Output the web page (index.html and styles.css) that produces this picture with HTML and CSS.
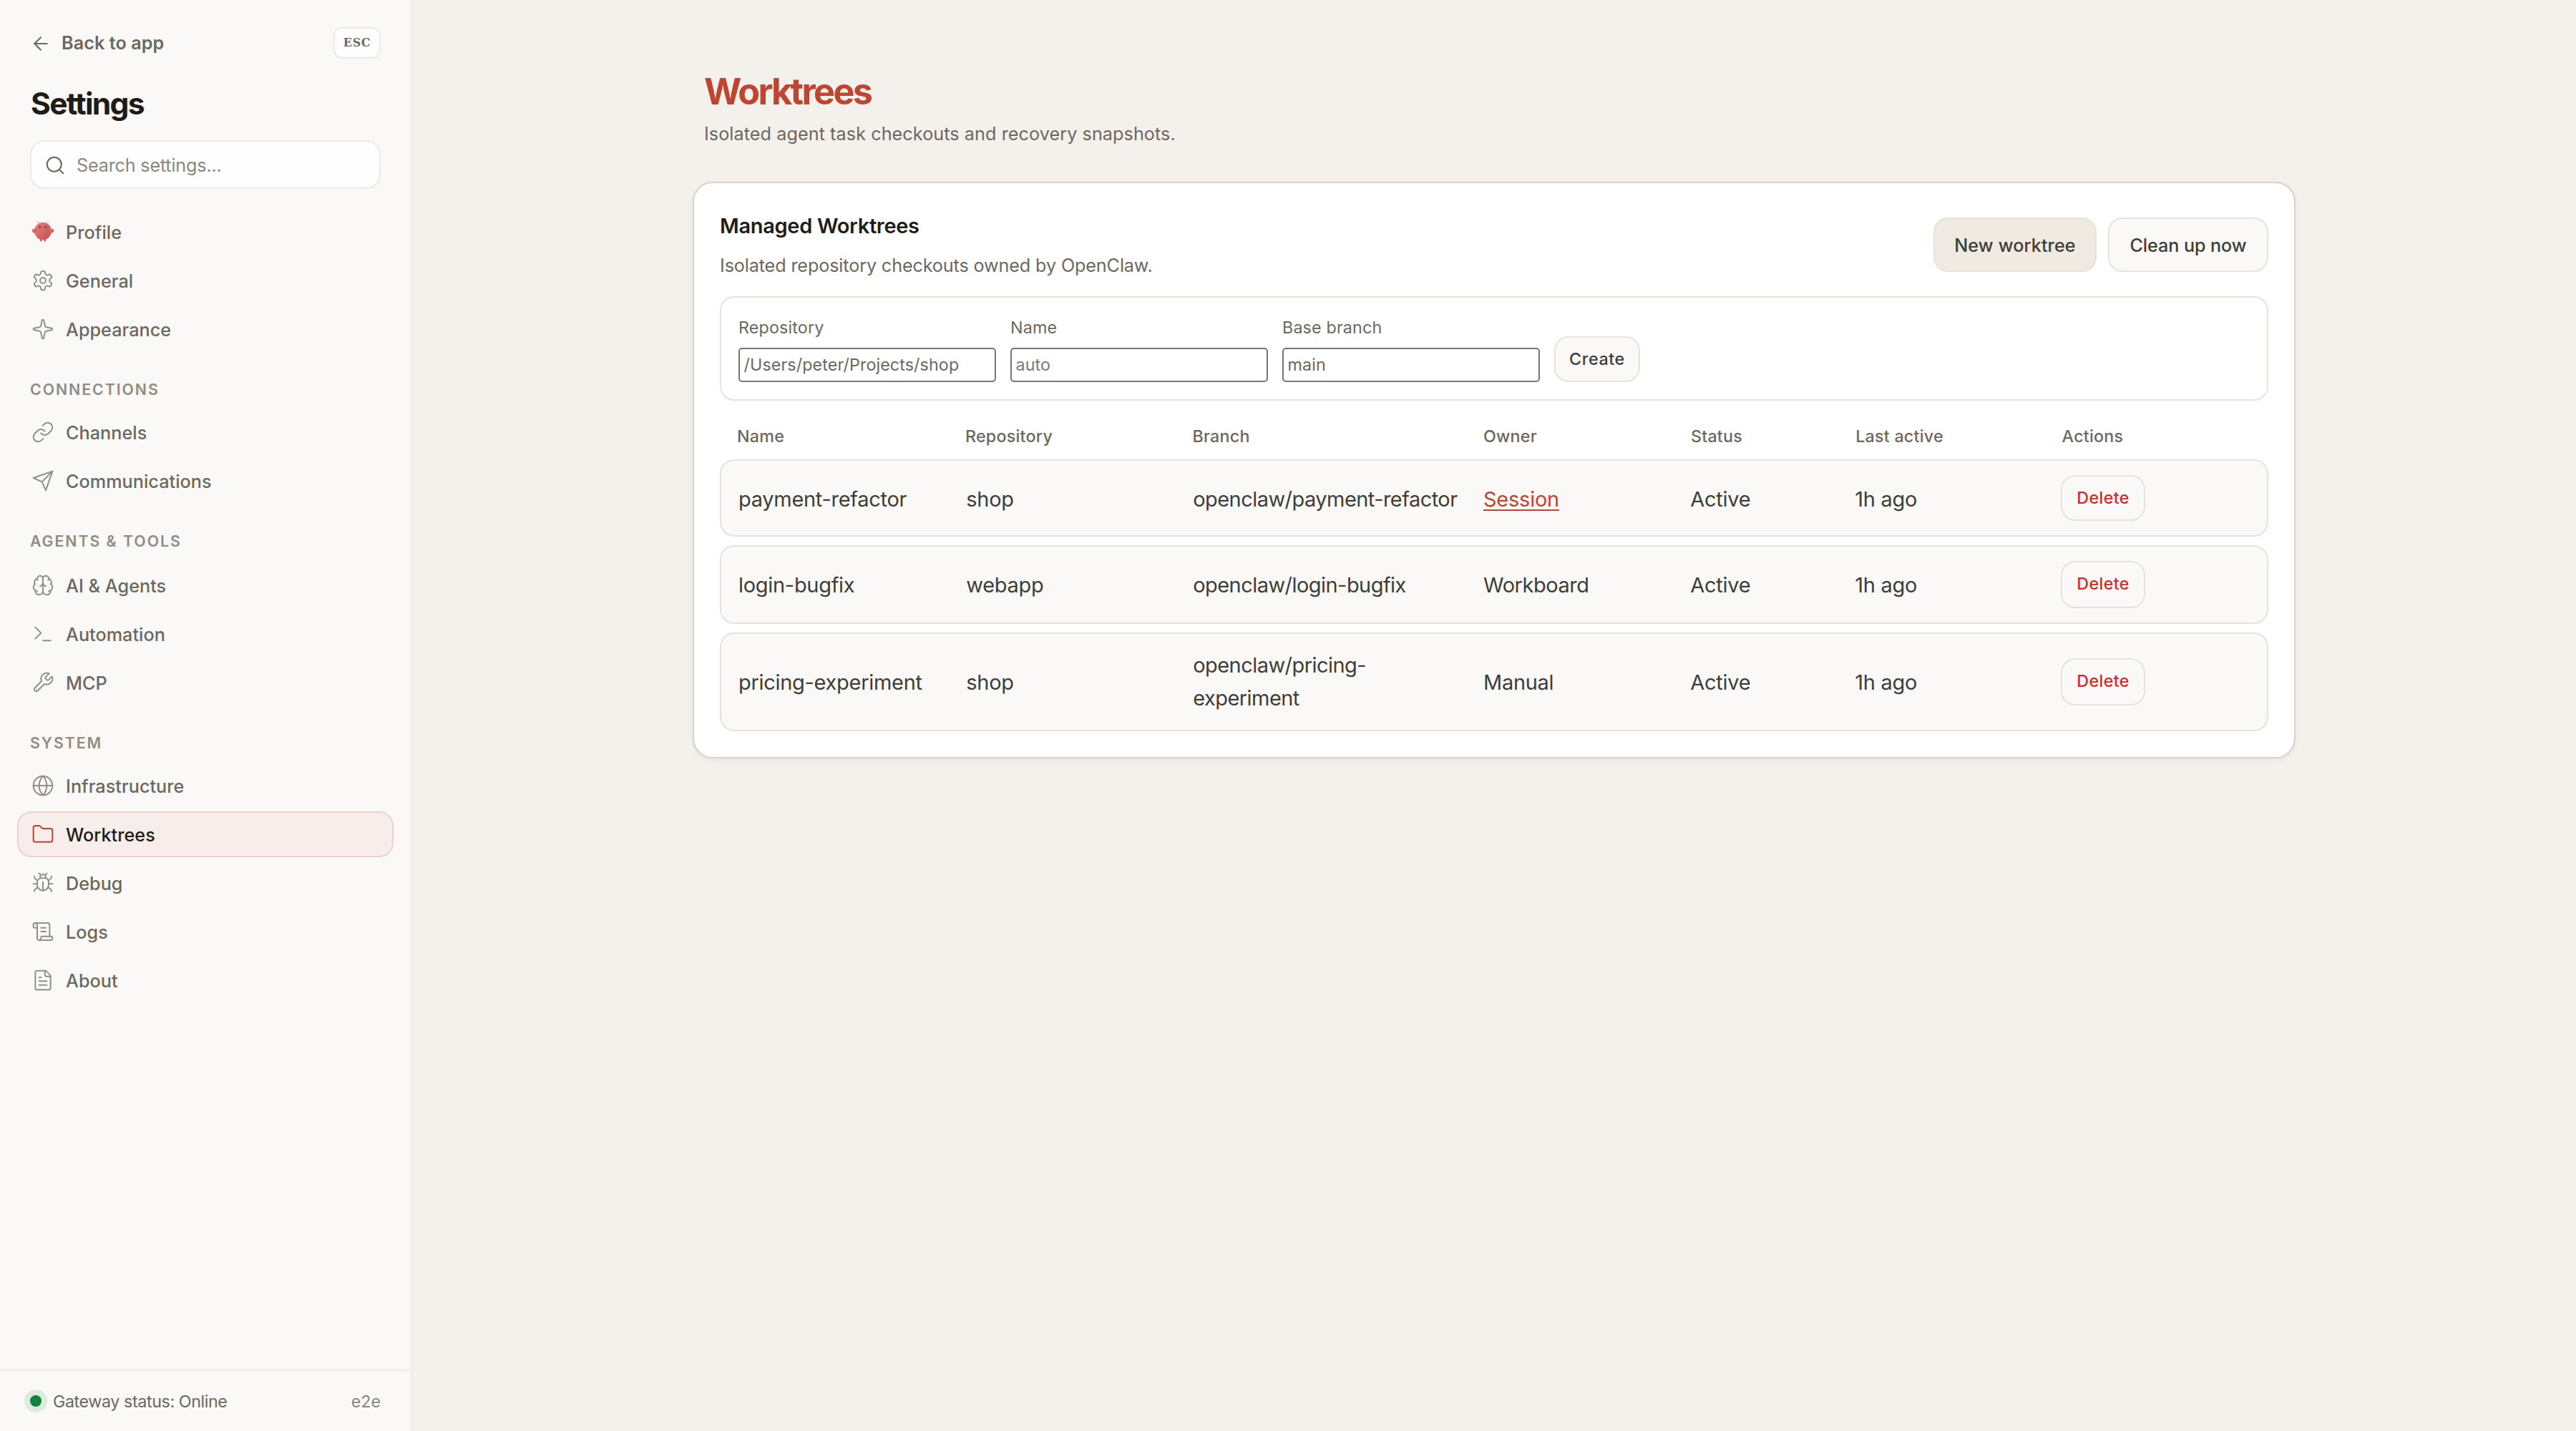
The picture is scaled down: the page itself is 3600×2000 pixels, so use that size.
FILE: index.html
```html
<!DOCTYPE html>
<html lang="en">
<head>
<meta charset="utf-8">
<title>Settings – Worktrees</title>
<link rel="stylesheet" href="styles.css">
</head>
<body>
<div class="app">
  <aside class="sidebar">
    <div class="sidebar-top">
      <a class="back">
        <svg class="icon icon-back" viewBox="0 0 24 24"><path d="m12 19-7-7 7-7"/><path d="M19 12H5"/></svg>
        <span>Back to app</span>
      </a>
      <kbd class="esc">ESC</kbd>
    </div>
    <h2 class="sidebar-title">Settings</h2>
    <label class="search">
      <svg class="icon icon-search" viewBox="0 0 24 24"><circle cx="11" cy="11" r="8"/><path d="m21 21-4.3-4.3"/></svg>
      <span>Search settings...</span>
    </label>

    <nav class="nav">
      <a class="nav-item">
        <svg class="mascot" viewBox="0 0 120 120">
          <defs><linearGradient id="shell" x1="0" y1="0" x2="1" y2="1"><stop offset="0" stop-color="#ff4d4d"/><stop offset="1" stop-color="#991b1b"/></linearGradient></defs>
          <path fill="url(#shell)" d="M60 10C30 10 15 35 15 55c0 20 15 40 30 45v10h10v-10s5 2 10 0v10h10v-10c15-5 30-25 30-45 0-20-15-45-45-45Z"/>
          <path fill="url(#shell)" d="M20 45C5 40 0 50 5 60c5 10 15 5 20-5 3-7 0-10-5-10Z"/>
          <path fill="url(#shell)" d="M100 45c15-5 20 5 15 15-5 10-15 5-20-5-3-7 0-10 5-10Z"/>
          <path fill="none" stroke="#ff4d4d" stroke-width="3" stroke-linecap="round" d="M45 15Q35 5 30 8M75 15Q85 5 90 8"/>
          <circle cx="45" cy="35" r="6" fill="#050810"/><circle cx="75" cy="35" r="6" fill="#050810"/>
          <circle cx="46" cy="34" r="2.5" fill="#00e5cc"/><circle cx="76" cy="34" r="2.5" fill="#00e5cc"/>
        </svg>
        <span>Profile</span>
      </a>
      <a class="nav-item">
        <svg class="icon" viewBox="0 0 24 24"><path d="M12.22 2h-.44a2 2 0 0 0-2 2v.18a2 2 0 0 1-1 1.73l-.43.25a2 2 0 0 1-2 0l-.15-.08a2 2 0 0 0-2.73.73l-.22.38a2 2 0 0 0 .73 2.73l.15.1a2 2 0 0 1 1 1.72v.51a2 2 0 0 1-1 1.74l-.15.09a2 2 0 0 0-.73 2.73l.22.38a2 2 0 0 0 2.73.73l.15-.08a2 2 0 0 1 2 0l.43.25a2 2 0 0 1 1 1.73V20a2 2 0 0 0 2 2h.44a2 2 0 0 0 2-2v-.18a2 2 0 0 1 1-1.73l.43-.25a2 2 0 0 1 2 0l.15.08a2 2 0 0 0 2.73-.73l.22-.39a2 2 0 0 0-.73-2.73l-.15-.08a2 2 0 0 1-1-1.74v-.5a2 2 0 0 1 1-1.74l.15-.09a2 2 0 0 0 .73-2.73l-.22-.38a2 2 0 0 0-2.73-.73l-.15.08a2 2 0 0 1-2 0l-.43-.25a2 2 0 0 1-1-1.73V4a2 2 0 0 0-2-2z"/><circle cx="12" cy="12" r="3"/></svg>
        <span>General</span>
      </a>
      <a class="nav-item">
        <svg class="icon" viewBox="0 0 24 24"><path d="M11.017 2.814a1 1 0 0 1 1.966 0l1.051 5.558a2 2 0 0 0 1.594 1.594l5.558 1.051a1 1 0 0 1 0 1.966l-5.558 1.051a2 2 0 0 0-1.594 1.594l-1.051 5.558a1 1 0 0 1-1.966 0l-1.051-5.558a2 2 0 0 0-1.594-1.594l-5.558-1.051a1 1 0 0 1 0-1.966l5.558-1.051a2 2 0 0 0 1.594-1.594z"/></svg>
        <span>Appearance</span>
      </a>

      <h3 class="nav-label">CONNECTIONS</h3>
      <a class="nav-item">
        <svg class="icon" viewBox="0 0 24 24"><path d="M10 13a5 5 0 0 0 7.54.54l3-3a5 5 0 0 0-7.07-7.07l-1.72 1.71"/><path d="M14 11a5 5 0 0 0-7.54-.54l-3 3a5 5 0 0 0 7.07 7.07l1.71-1.71"/></svg>
        <span>Channels</span>
      </a>
      <a class="nav-item">
        <svg class="icon" viewBox="0 0 24 24"><path d="m22 2-7 20-4-9-9-4Z"/><path d="M22 2 11 13"/></svg>
        <span>Communications</span>
      </a>

      <h3 class="nav-label nav-label-agents">AGENTS &amp; TOOLS</h3>
      <a class="nav-item">
        <svg class="icon" viewBox="0 0 24 24"><path d="M12 5a3 3 0 1 0-5.997.125 4 4 0 0 0-2.526 5.77 4 4 0 0 0 .556 6.588A4 4 0 1 0 12 18Z"/><path d="M12 5a3 3 0 1 1 5.997.125 4 4 0 0 1 2.526 5.77 4 4 0 0 1-.556 6.588A4 4 0 1 1 12 18Z"/><path d="M15 13a4.5 4.5 0 0 1-3-4 4.5 4.5 0 0 1-3 4"/><path d="M17.599 6.5a3 3 0 0 0 .399-1.375"/><path d="M6.003 5.125A3 3 0 0 0 6.401 6.5"/><path d="M3.477 10.896a4 4 0 0 1 .585-.396"/><path d="M19.938 10.5a4 4 0 0 1 .585.396"/><path d="M6 18a4 4 0 0 1-1.967-.516"/><path d="M19.967 17.484A4 4 0 0 1 18 18"/></svg>
        <span>AI &amp; Agents</span>
      </a>
      <a class="nav-item">
        <svg class="icon" viewBox="0 0 24 24"><path d="m4 17 6-6-6-6"/><path d="M12 19h8"/></svg>
        <span>Automation</span>
      </a>
      <a class="nav-item">
        <svg class="icon" viewBox="0 0 24 24"><path d="M14.7 6.3a1 1 0 0 0 0 1.4l1.6 1.6a1 1 0 0 0 1.4 0l3.77-3.77a6 6 0 0 1-7.94 7.94l-6.91 6.91a2.12 2.12 0 0 1-3-3l6.91-6.91a6 6 0 0 1 7.94-7.94l-3.76 3.76z"/></svg>
        <span>MCP</span>
      </a>

      <h3 class="nav-label">SYSTEM</h3>
      <a class="nav-item">
        <svg class="icon" viewBox="0 0 24 24"><circle cx="12" cy="12" r="10"/><path d="M12 2a14.5 14.5 0 0 0 0 20 14.5 14.5 0 0 0 0-20"/><path d="M2 12h20"/></svg>
        <span>Infrastructure</span>
      </a>
      <a class="nav-item active">
        <svg class="icon" viewBox="0 0 24 24"><path d="M20 20a2 2 0 0 0 2-2V8a2 2 0 0 0-2-2h-7.9a2 2 0 0 1-1.69-.9L9.6 3.9A2 2 0 0 0 7.93 3H4a2 2 0 0 0-2 2v13a2 2 0 0 0 2 2Z"/></svg>
        <span>Worktrees</span>
      </a>
      <a class="nav-item">
        <svg class="icon" viewBox="0 0 24 24"><path d="m8 2 1.88 1.88"/><path d="M14.12 3.88 16 2"/><path d="M9 7.13v-1a3.003 3.003 0 1 1 6 0v1"/><path d="M12 20c-3.3 0-6-2.7-6-6v-3a4 4 0 0 1 4-4h4a4 4 0 0 1 4 4v3c0 3.3-2.7 6-6 6"/><path d="M12 20v-9"/><path d="M6.53 9C4.6 8.8 3 7.1 3 5"/><path d="M6 13H2"/><path d="M3 21c0-2.1 1.7-3.9 3.8-4"/><path d="M20.97 5c0 2.1-1.6 3.8-3.5 4"/><path d="M22 13h-4"/><path d="M17.2 17c2.1.1 3.8 1.9 3.8 4"/></svg>
        <span>Debug</span>
      </a>
      <a class="nav-item">
        <svg class="icon" viewBox="0 0 24 24"><path d="M15 12h-5"/><path d="M15 8h-5"/><path d="M19 17V5a2 2 0 0 0-2-2H4"/><path d="M8 21h12a2 2 0 0 0 2-2v-1a1 1 0 0 0-1-1H11a1 1 0 0 0-1 1v1a2 2 0 1 1-4 0V5a2 2 0 1 0-4 0v2a1 1 0 0 0 1 1h3"/></svg>
        <span>Logs</span>
      </a>
      <a class="nav-item">
        <svg class="icon" viewBox="0 0 24 24"><path d="M15 2H6a2 2 0 0 0-2 2v16a2 2 0 0 0 2 2h12a2 2 0 0 0 2-2V7Z"/><path d="M14 2v4a2 2 0 0 0 2 2h4"/><path d="M10 9H8"/><path d="M16 13H8"/><path d="M16 17H8"/></svg>
        <span>About</span>
      </a>
    </nav>

    <footer class="status">
      <i class="status-dot"></i>
      <span class="status-text">Gateway status: Online</span>
      <span class="status-version">e2e</span>
    </footer>
  </aside>

  <main class="main">
    <div class="page">
      <header class="page-head">
        <h1 class="page-title">Worktrees</h1>
        <p class="page-sub">Isolated agent task checkouts and recovery snapshots.</p>
      </header>
      <section class="card">
        <div class="card-head">
          <div class="card-text">
            <h2 class="card-title">Managed Worktrees</h2>
            <p class="card-sub">Isolated repository checkouts owned by OpenClaw.</p>
          </div>
          <div class="card-actions">
            <button class="btn btn-on">New worktree</button>
            <button class="btn btn-clean">Clean up now</button>
          </div>
        </div>

        <form class="create">
          <label class="field"><span>Repository</span><input class="input input-warm" placeholder="/Users/peter/Projects/shop"></label>
          <label class="field"><span>Name</span><input class="input" placeholder="auto"></label>
          <label class="field"><span>Base branch</span><input class="input input-warm" placeholder="main"></label>
          <button type="button" class="btn btn-small btn-create">Create</button>
        </form>

        <div class="table">
          <div class="cols table-head">
            <span>Name</span><span>Repository</span><span>Branch</span><span>Owner</span><span>Status</span><span>Last active</span><span>Actions</span>
          </div>
          <div class="cols row row-first">
            <span>payment-refactor</span><span>shop</span><span class="branch">openclaw/payment-refactor</span><span><a class="link">Session</a></span><span>Active</span><span>1h ago</span><button class="btn btn-small btn-danger">Delete</button>
          </div>
          <div class="cols row">
            <span>login-bugfix</span><span>webapp</span><span class="branch">openclaw/login-bugfix</span><span class="tight">Workboard</span><span>Active</span><span>1h ago</span><button class="btn btn-small btn-danger">Delete</button>
          </div>
          <div class="cols row row-last">
            <span>pricing-experiment</span><span>shop</span><span class="branch">openclaw/pricing-experiment</span><span>Manual</span><span>Active</span><span>1h ago</span><button class="btn btn-small btn-danger">Delete</button>
          </div>
        </div>
      </section>
    </div>
  </main>
</div>
</body>
</html>
```

FILE: styles.css
```css
* { box-sizing: border-box; margin: 0; padding: 0; }

body {
  font-family: Inter, "Liberation Sans", sans-serif;
  font-size: 25.2px;
  color: #6d685d;
  background: #f4f0eb;
}

button, input { font-family: inherit; }

.app { display: flex; height: 2000px; }

.icon {
  width: 32px;
  height: 32px;
  flex: none;
  fill: none;
  stroke: currentColor;
  stroke-width: 1.5;
  stroke-linecap: round;
  stroke-linejoin: round;
}

/* Sidebar */
.sidebar {
  display: flex;
  flex-direction: column;
  flex: none;
  width: 576px;
  padding-top: 38px;
  background: #faf9f7;
  border-right: 2px solid #eceae3;
}

.sidebar-top {
  display: flex;
  align-items: center;
  justify-content: space-between;
  height: 44px;
  padding: 0 42px;
}

.back { display: flex; align-items: center; gap: 14px; font-weight: 600; line-height: 44px; }
.back span { margin-top: -1px; letter-spacing: 0.06px; }
.icon-back { width: 30px; height: 30px; margin-top: 2px; stroke-width: 1.6; }

.esc {
  width: 66px;
  height: 44px;
  border: 2px solid #eceae3;
  border-radius: 12px;
  background: #fefefe;
  font: bold 16px/40px "DejaVu Serif", serif;
  letter-spacing: 0.6px;
  text-align: center;
}

.sidebar-title {
  margin: 38px 43px 0;
  font-size: 42.6px;
  font-weight: 700;
  line-height: 50px;
  letter-spacing: -1.75px;
  color: #1f1c17;
}

.search {
  display: flex;
  align-items: center;
  gap: 15px;
  height: 68px;
  margin: 26px 42px 0;
  padding-left: 18px;
  border: 2px solid #eceae3;
  border-radius: 20px;
  background: #fefefe;
  color: #8c877c;
  letter-spacing: -0.19px;
}
.search span { padding-top: 2px; }
.icon-search { width: 30px; height: 30px; margin-top: 1px; color: #6d685d; stroke-width: 1.6; }

.nav { flex: 1; display: flex; flex-direction: column; padding: 28px 24px 0; }

.nav-item {
  display: flex;
  align-items: center;
  gap: 16px;
  height: 64px;
  padding: 0 18px;
  border: 2px solid transparent;
  border-radius: 20px;
  font-weight: 500;
}
.nav-item span { padding-top: 2px; letter-spacing: 0.04px; }
.nav-item + .nav-item { margin-top: 4px; }
.nav-item .icon { opacity: 0.72; }
.nav-item.active { background: #f7edea; border-color: #efd0ca; color: #1f1c17; }
.nav-item.active .icon { color: #c0442f; opacity: 1; }
.mascot { width: 32px; height: 32px; flex: none; opacity: 0.75; }

.nav-label {
  height: 80px;
  padding: 37px 0 0 18px;
  font-size: 21.3px;
  font-weight: 600;
  line-height: 31px;
  letter-spacing: 1.95px;
  color: #928d82;
}
.nav-label-agents { height: 82px; }

.status {
  display: flex;
  align-items: center;
  height: 86px;
  padding: 0 42px;
  border-top: 2px solid #efeae3;
  font-size: 23.3px;
}
.status-dot {
  width: 16px;
  height: 16px;
  margin-right: 16px;
  border-radius: 50%;
  background: #15803d;
  box-shadow: 0 0 0 8px #dcebe0;
}
.status-text { letter-spacing: -0.42px; }
.status-version { margin-left: auto; color: #8c877c; }

/* Main */
.main { flex: 1; padding-top: 96px; }
.page { width: 2240px; margin-left: 392px; }
.page-head { padding-left: 16px; }
.page-title { font-size: 50.4px; line-height: 64px; font-weight: 700; letter-spacing: -2.65px; color: #bf4531; }
.page-sub { margin-top: 7px; line-height: 40px; letter-spacing: 0.07px; }

.card {
  height: 806px;
  margin-top: 47px;
  padding: 36px;
  border: 2px solid #d9d2c7;
  border-radius: 28px;
  background: #fff;
  box-shadow: 0 2px 6px rgba(60, 45, 20, 0.07);
}

.card-head { display: flex; justify-content: space-between; align-items: center; height: 100px; }
.card-text { padding-top: 3px; }
.card-title { font-size: 29px; line-height: 40px; font-weight: 600; letter-spacing: -0.32px; color: #1f1c17; }
.card-sub { margin-top: 15px; line-height: 40px; letter-spacing: -0.13px; }
.card-actions { display: flex; gap: 16px; }

.btn {
  width: 228px;
  height: 76px;
  padding-top: 2px;
  border: 2px solid #e8e3da;
  border-radius: 20px;
  background: #faf9f7;
  color: #403d36;
  font-size: 25.2px;
  font-weight: 500;
  text-align: center;
}
.btn-on { background: #f0eae3; letter-spacing: 0.1px; }
.btn-clean { width: 224px; letter-spacing: -0.09px; }
.btn-small { height: 64px; padding: 0 0 1px; font-size: 23.3px; }
.btn-create { width: 120px; letter-spacing: 0.6px; }
.btn-danger { width: 118px; letter-spacing: 0.35px; color: #dc2626; }

.create {
  display: flex;
  align-items: flex-end;
  gap: 20px;
  height: 146px;
  margin-top: 22px;
  padding: 0 24px 24px;
  border: 2px solid #e8e3da;
  border-radius: 20px;
}
.field { display: flex; flex-direction: column; gap: 11px; width: 360px; font-size: 23.3px; line-height: 35px; letter-spacing: 0.15px; }
.input {
  height: 48px;
  padding: 0 5.5px 2px;
  border: 2px solid #767676;
  border-radius: 5px;
  background: #fff;
  font-size: 23.3px;
  letter-spacing: 0.09px;
}
.input::placeholder { color: #7a7a7a; }
.input-warm::placeholder { color: #6d685d; }

/* Table */
.cols {
  display: grid;
  grid-template-columns: 294.5fr 293fr 382fr 265.5fr 206fr 264fr 264fr;
  column-gap: 24px;
  padding: 0 24px;
}
.table-head { height: 82px; padding-top: 33px; font-size: 23.3px; font-weight: 500; line-height: 33px; letter-spacing: 0.22px; }

.row {
  align-items: center;
  height: 110px;
  margin-bottom: 12px;
  border: 2px solid #e8e3da;
  border-radius: 20px;
  background: #faf9f7;
  color: #403d36;
  font-size: 29px;
  line-height: 46px;
  letter-spacing: -0.3px;
}
.row > span { padding-top: 2px; }
.row-first { height: 108px; }
.row-first > span { padding-top: 4px; }
.row-last { height: 138px; margin-bottom: 0; }
.row-last > .branch { padding-top: 0; }
.row .btn { height: 66px; padding-bottom: 3px; }
.row-first .btn { height: 64px; padding-bottom: 1px; }
.branch { letter-spacing: -0.55px; }
.tight { letter-spacing: -0.45px; }
.link { color: #bf4531; text-decoration: underline; text-decoration-thickness: 2px; text-underline-offset: 4px; letter-spacing: -0.25px; }
```
